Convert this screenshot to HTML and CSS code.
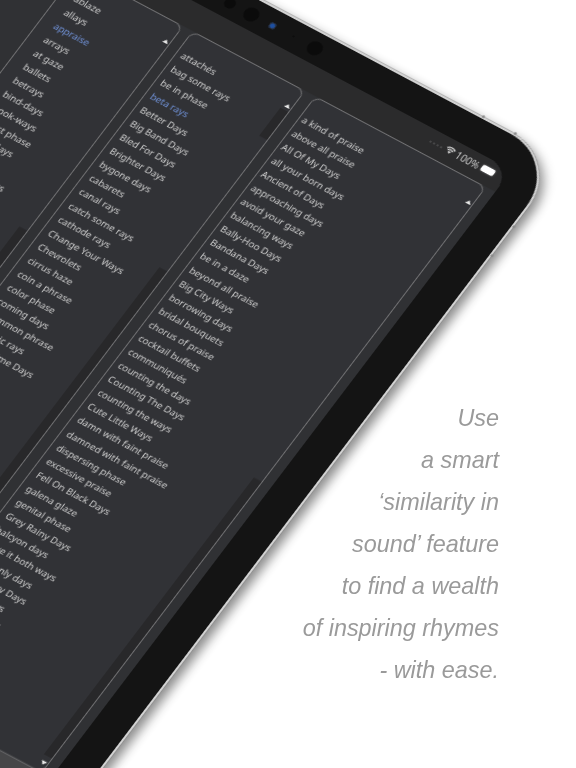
FILE: index.html
```html
<!DOCTYPE html>
<html lang="en">
<head>
<meta charset="utf-8">
<title>Rhymes</title>
<link rel="stylesheet" href="styles.css">
</head>
<body>
<main class="page">
  <div class="device">
    <span class="nub nub-a"></span><span class="nub nub-b"></span><span class="nub nub-c"></span><span class="nub nub-d"></span>
    <div class="sensors">
      <i class="sensor s-a"></i><i class="sensor s-b"></i><i class="sensor s-c"></i><i class="sensor s-d"></i><i class="sensor s-e"></i>
    </div>
    <div class="screen">
      <div class="status">
        <span class="dots"><i></i><i></i><i></i><i></i></span>
        <svg class="wifi" viewBox="0 0 12 10" width="11" height="9"><path d="M1 3.6a7 7 0 0 1 10 0M2.8 5.5a4.5 4.5 0 0 1 6.4 0" fill="none" stroke="#d8d8d8" stroke-width="1.4"/><path d="M4.2 7.2a2.4 2.4 0 0 1 3.6 0L6 9.2z" fill="#d8d8d8"/></svg>
        <span class="pct">100%</span>
        <span class="battery"></span>
      </div>
      <div class="panels">
        <section class="panel panel-a">
          <i class="arrow arrow-top"></i><i class="track track-a"></i>
          <ul class="list">
            <li>ablaze</li><li>allays</li><li class="hit">appraise</li><li>arrays</li><li>at gaze</li><li>ballets</li><li>betrays</li><li>bind-days</li><li>book-ways</li><li>burst phase</li><li>busy days</li><li>&nbsp;</li><li>cabaret stars</li>
          </ul>
        </section>
        <section class="panel panel-b">
          <i class="arrow arrow-top"></i><i class="track track-b1"></i><i class="track track-b2"></i>
          <ul class="list">
            <li>attachés</li><li>bag some rays</li><li>be in phase</li><li class="hit">beta rays</li><li>Better Days</li><li>Big Band Days</li><li>Bled For Days</li><li>Brighter Days</li><li>bygone days</li><li>cabarets</li><li>canal rays</li><li>catch some rays</li><li>cathode rays</li><li>Change Your Ways</li><li>Chevrolets</li><li>cirrus haze</li><li>coin a phrase</li><li>color phase</li><li>coming days</li><li>common phrase</li><li>cosmic rays</li><li>Crazy Time Days</li>
          </ul>
        </section>
        <section class="panel panel-c">
          <i class="arrow arrow-top"></i><i class="track track-c"></i><i class="arrow arrow-bottom"></i>
          <ul class="list">
            <li>a kind of praise</li><li>above all praise</li><li>All Of My Days</li><li>all your born days</li><li>Ancient of Days</li><li>approaching days</li><li>avoid your gaze</li><li>balancing ways</li><li>Bally-Hoo Days</li><li>Bandana Days</li><li>be in a daze</li><li>beyond all praise</li><li>Big City Ways</li><li>borrowing days</li><li>bridal bouquets</li><li>chorus of praise</li><li>cocktail buffets</li><li>communiqués</li><li>counting the days</li><li>Counting The Days</li><li>counting the ways</li><li>Cute Little Ways</li><li>damn with faint praise</li><li>damned with faint praise</li><li>dispersing phase</li><li>excessive praise</li><li>Fell On Black Days</li><li>galena glaze</li><li>genital phase</li><li>Grey Rainy Days</li><li>halcyon days</li><li>have it both ways</li><li>heavenly days</li><li>Hazy Lazy Days</li><li>hot sun rays</li><li>inner displays</li>
          </ul>
        </section>
      </div>
      <div class="tabbar"></div>
    </div>
  </div>
  <div class="caption">
    <p>Use</p>
    <p>a smart</p>
    <p>‘similarity in</p>
    <p>sound’ feature</p>
    <p>to find a wealth</p>
    <p>of inspiring rhymes</p>
    <p>- with ease.</p>
  </div>
</main>
</body>
</html>
```
FILE: styles.css
```css
* { box-sizing: border-box; }
html, body { margin: 0; padding: 0; background: #fff; }
.page {
  position: relative;
  width: 576px;
  height: 768px;
  overflow: hidden;
  background: #fff;
}
.device {
  position: absolute;
  left: 0;
  top: 0;
  width: 900px;
  height: 1000px;
  padding: 0 34px 34px 0;
  display: flex;
  flex-direction: column;
  background: #141414;
  border: 2px solid #d2d2d2;
  border-radius: 0 60px 0 0;
  box-shadow: 0 0 0 .5px #8a8a8a, 7px 3px 11px rgba(0, 0, 0, .45);
  transform-origin: 0 0;
  transform: matrix(.883, .469, -.605, .7975, -230.7, -262.1);
  will-change: transform;
}
.nub {
  position: absolute;
  width: 3px;
  height: 3px;
  border-radius: 50%;
  background: #8a8a8a;
}
.nub-a { right: 88px; top: -4px; }
.nub-b { right: 52px; top: -4px; }
.nub-c { right: -4px; top: 80px; }
.nub-d { right: -4px; top: 116px; }
.sensors {
  height: 32px;
  padding-left: 520px;
  display: flex;
  align-items: center;
}
.sensor { display: block; flex: none; width: 24px; }
.sensor::after {
  content: "";
  display: block;
  margin: auto;
  border-radius: 50%;
  background: #0b0b0b;
}
.s-a::after { width: 11px; height: 11px; }
.s-b::after { width: 15px; height: 15px; }
.s-c::after { width: 7px; height: 7px; background: #1d4fa0; box-shadow: inset 0 0 0 1px #2a2d36; }
.s-d::after { width: 2px; height: 2px; }
.s-e::after { width: 15px; height: 15px; }
.screen {
  flex: 1;
  display: flex;
  flex-direction: column;
  min-height: 0;
  background: #303134;
  border-radius: 0 24px 0 0;
  overflow: hidden;
}
.status {
  height: 27px;
  flex: none;
  padding: 0 12px 4px 0;
  display: flex;
  justify-content: flex-end;
  align-items: center;
  background: #2b2b2c;
  color: #c8c8c8;
  font: 10px "Noto Sans", sans-serif;
}
.dots { display: flex; gap: 2px; margin-right: 3px; padding-top: 3px; }
.dots i { width: 2px; height: 2px; border-radius: 50%; background: #505050; }
.wifi { margin-right: 2px; }
.pct { margin-right: 3px; }
.battery {
  width: 14px;
  height: 7px;
  border-radius: 2px;
  background: #fff;
  box-shadow: 0 0 2px rgba(255, 255, 255, .5);
}
.panels {
  height: 735px;
  flex: none;
  padding-right: 10px;
  display: flex;
  justify-content: flex-end;
  gap: 10px;
}
.panel {
  position: relative;
  flex: none;
  border: 1px solid #707072;
  border-radius: 8px;
  background: #313236;
  overflow: hidden;
  padding: 17px 0 0 5px;
}
.panel-a { width: 120px; padding-left: 14px; }
.panel-b { width: 128px; margin-right: 1px; }
.panel-c { width: 194px; padding-left: 3px; }
.list {
  list-style: none;
  margin: 0;
  padding: 0;
  color: #cfcfcf;
  font: 9.6px/17.05px "Noto Sans", sans-serif;
  white-space: nowrap;
  transform-origin: 0 0;
  transform: matrix(1, 0, .007, 1, 0, 0);
}
.hit { color: #7193da; }
.arrow {
  position: absolute;
  right: 1px;
  width: 0;
  height: 0;
  border: 3px solid transparent;
  border-top-width: 0;
  border-bottom: 4px solid #e8e8e8;
}
.arrow-top { top: 19px; }
.arrow-bottom { bottom: 7px; transform: scaleY(-1); }
.track {
  position: absolute;
  right: 0;
  width: 9px;
  background: #28282a;
}
.track-a { top: 256px; bottom: 0; }
.track-b1 { top: 26px; height: 35px; }
.track-b2 { top: 226px; bottom: 0; }
.track-c { top: 369px; bottom: 17px; }
.tabbar { flex: 1; background: #464648; }
.caption {
  position: relative;
  padding: 397px 77px 0 0;
  color: #9a9a9a;
  font: italic 23.4px/42px "Liberation Sans", sans-serif;
  text-align: right;
}
.caption p { margin: 0; }
```
